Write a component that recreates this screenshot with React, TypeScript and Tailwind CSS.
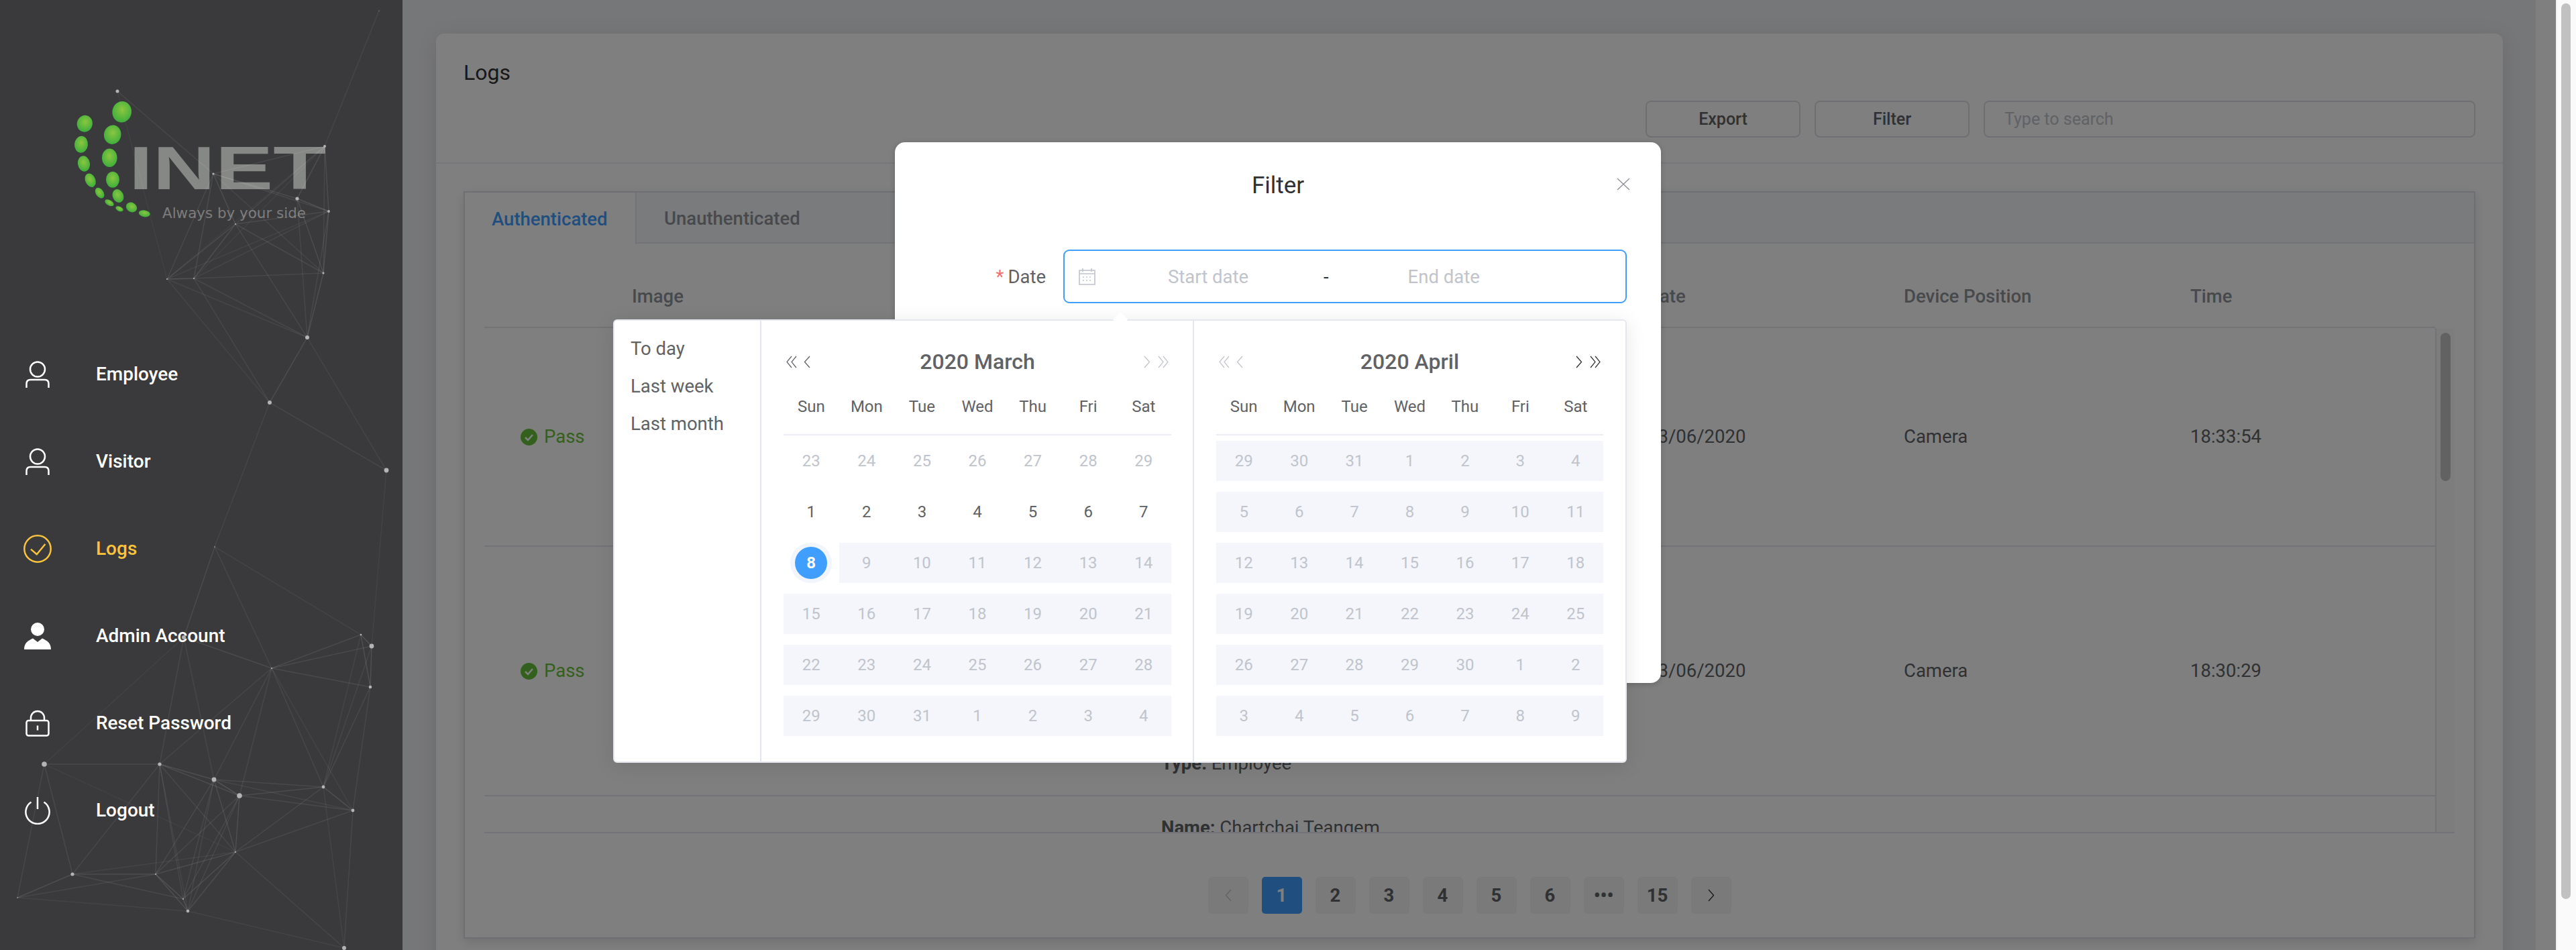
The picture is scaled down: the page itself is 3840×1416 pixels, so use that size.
const font = { fontFamily: 'Roboto, "Liberation Sans", sans-serif' }

const nodes: Record<string, [number, number, number]> = {
  A: [175, 136, 2.5], B: [565, 16, 0.6], C: [484, 218, 2], D: [318, 259, 1.6], E: [443, 296, 2.6],
  F: [490, 315, 1.9], G: [351, 334, 1], H: [482, 407, 1.6], I: [249, 416, 1], J: [289, 415, 1],
  K: [458, 503, 3], L: [402, 600, 3], M: [576, 701, 3.4], N: [320, 815, 0.8], O: [274, 950, 3],
  P: [405, 996, 1], Q: [538, 946, 1.3], R: [554, 963, 3.4], S: [552, 1024, 2.3], T: [66, 1139, 3.8],
  U: [238, 1139, 2.6], V: [319, 1162, 3.4], W: [357, 1186, 3.8], X: [482, 1173, 2.4], Y: [526, 1208, 2.4],
  Z: [351, 1270, 1], a: [108, 1303, 2.6], b: [232, 1303, 1], c: [26, 1338, 0.8], d: [273, 1340, 1],
  e: [280, 1358, 2.3], f: [513, 1413, 3],
}

const edges = 'AD AI BC CD CE CF CG CH CI CJ DE DF DG DH DI DJ EF EH EK FG FH FI FJ FK GH GI GJ GK HJ HK IJ IK IL JK JL KL KM LM LN NO NP NQ OP OU OV PQ PR PS PU PV PW PX PY QR QS QX RS RX SX SY TU Ta Tc TZ TO UV UW Ub Ud Ue UZ Ua VW VX VZ Vb Vd Ve VY WX WY WZ Wb Wd We XY XZ Xf YZ Yf Zb Za Ze Zd Zf ab ac ad bc bd be ce de ef MR'
  .split(' ')

const dots: [number, number, number, number, number][] = [
  [181.7, 166.7, 14.3, 15.7, 10], [167.7, 200.7, 12.7, 14.3, 10], [163.3, 235.3, 11.3, 13.7, 0],
  [168, 267.7, 10, 12, 0], [176, 292, 8, 10.3, -25], [196, 309, 8.5, 7, 30], [215.3, 318.3, 8.5, 5, 10],
  [126.3, 184.3, 11.5, 12.5, 15], [121, 215.3, 10, 12.5, 5], [125, 244, 9, 11.7, -10],
  [134.7, 268.7, 7.5, 10.7, -25], [148.7, 287.7, 5.7, 8.7, -35], [163, 302.3, 7.3, 4, 30], [178, 311.3, 6, 3.5, 25],
]

function Logo() {
  return (
    <svg width="600" height="493" className="block">
      <defs>
        <radialGradient id="dot" cx="50%" cy="40%" r="60%">
          <stop offset="0%" stopColor="#8cc63f" />
          <stop offset="100%" stopColor="#3cae3c" />
        </radialGradient>
      </defs>
      {dots.map(([cx, cy, rx, ry, rot]) => (
        <ellipse key={cx + '-' + cy} cx={cx} cy={cy} rx={rx} ry={ry} fill="url(#dot)" transform={`rotate(${rot} ${cx} ${cy})`} />
      ))}
      <text x="192" y="282" textLength="294" lengthAdjust="spacingAndGlyphs" fontSize="91" fontWeight="700" fill="#868885" fontFamily="Liberation Sans">INET</text>
      <text x="242" y="325" textLength="214" lengthAdjust="spacingAndGlyphs" fontSize="22" fill="#7c7c7c" fontFamily="DejaVu Sans">Always by your side</text>
    </svg>
  )
}

function Network() {
  return (
    <svg width="600" height="1416" className="absolute inset-0 pointer-events-none">
      {edges.map((e) => {
        const a = nodes[e[0]]
        const b = nodes[e[1]]
        // shorter links read brighter, long ones nearly fade out
        const len = Math.hypot(a[0] - b[0], a[1] - b[1])
        const opacity = Math.max(0.035, 0.13 * (1 - len / 420))
        return <line key={e} x1={a[0]} y1={a[1]} x2={b[0]} y2={b[1]} stroke="#ffffff" strokeOpacity={opacity} strokeWidth="1.5" />
      })}
      {Object.keys(nodes).map((k) => (
        <circle key={k} cx={nodes[k][0]} cy={nodes[k][1]} r={nodes[k][2]} fill="#b4b4b4" />
      ))}
    </svg>
  )
}

function UserIcon() {
  return (
    <svg width="36" height="40" viewBox="0 0 36 40" fill="none" stroke="currentColor" strokeWidth="2.5">
      <ellipse cx="18" cy="12.5" rx="11" ry="11" />
      <path d="M1.5 40v-6q0-6 6-6h21q6 0 6 6v6" />
    </svg>
  )
}

function CheckIcon() {
  return (
    <svg width="42" height="42" viewBox="0 0 42 42" fill="none" stroke="currentColor" strokeWidth="2.5">
      <ellipse cx="21" cy="21" rx="19.7" ry="19.7" />
      <path d="M11 21.6l8.8 7.7L32.4 14" />
    </svg>
  )
}

function AdminIcon() {
  return (
    <svg width="40" height="40" viewBox="0 0 40 40" fill="currentColor">
      <ellipse cx="20" cy="10" rx="10" ry="10" />
      <path d="M0 40C0 30 6 27 13 23.5L20 29l7-5.5C34 27 40 30 40 40Z" />
    </svg>
  )
}

function LockIcon() {
  return (
    <svg width="36" height="40" viewBox="0 0 36 40" fill="none" stroke="currentColor" strokeWidth="2.5">
      <rect x="1.5" y="16" width="33" height="22.5" rx="3" />
      <path d="M8 16v-4a10 10 0 0 1 20 0v4M18 23.5v7" />
    </svg>
  )
}

function PowerIcon() {
  return (
    <svg width="38" height="41" viewBox="0 0 38 41" fill="none" stroke="currentColor" strokeWidth="2.5">
      <path d="M9.5 7.5a17.6 17.6 0 1 0 19 0M19 0v18" />
    </svg>
  )
}

const menu = [
  { label: 'Employee', icon: <UserIcon /> },
  { label: 'Visitor', icon: <UserIcon /> },
  { label: 'Logs', icon: <CheckIcon />, active: true },
  { label: 'Admin Account', icon: <AdminIcon /> },
  { label: 'Reset Password', icon: <LockIcon /> },
  { label: 'Logout', icon: <PowerIcon /> },
]

function Sidebar() {
  return (
    <aside className="relative z-20 w-[600px] shrink-0 h-[1416px] bg-[#3a3a3c] overflow-hidden">
      <Logo />
      {menu.map((item) => (
        <div key={item.label} className={`flex items-center h-[130px] ${item.active ? 'text-[#f9c33d]' : 'text-white'}`}>
          <div className="w-[112px] flex justify-center">{item.icon}</div>
          <span className="ml-[31px] text-[28px] font-medium">{item.label}</span>
        </div>
      ))}
      <Network />
    </aside>
  )
}

function PassCell() {
  return (
    <div className="flex items-center gap-[10px] pl-[54px] text-[27.5px] text-[#67c23a]">
      <svg width="25" height="25" viewBox="0 0 25 25">
        <circle cx="12.5" cy="12.5" r="12.5" fill="#67c23a" />
        <path d="M7 13l4 4 7-8" fill="none" stroke="#ffffff" strokeWidth="2.5" />
      </svg>
      Pass
    </div>
  )
}

const cols = 'grid grid-cols-[220px_789px_725px_382px_427px_1fr]'

function TableRow({ time, height }: { time: string; height: string }) {
  return (
    <div className={`${cols} items-center border-b-[2.5px] border-[#e4e7ed] text-[27.5px] text-[#606266] ${height}`}>
      <PassCell />
      <div />
      <div className="self-end pb-[27px] leading-[40px]">
        <b className="font-bold">Type:</b> Employee
      </div>
      <div>13/06/2020</div>
      <div>Camera</div>
      <div>{time}</div>
    </div>
  )
}

const pages = ['1', '2', '3', '4', '5', '6', '•••', '15']

function Chevron({ dir, color }: { dir: 'left' | 'right'; color: string }) {
  return (
    <svg width="10" height="19" viewBox="0 0 10 19" fill="none" stroke={color} strokeWidth="1.3">
      <path d={dir === 'left' ? 'M9 1L1.5 9.5 9 18' : 'M1 1l7.5 8.5L1 18'} />
    </svg>
  )
}

function DoubleChevron({ dir, color }: { dir: 'left' | 'right'; color: string }) {
  return (
    <svg width="16" height="19" viewBox="0 0 16 19" fill="none" stroke={color} strokeWidth="1.2">
      <path d={dir === 'left' ? 'M8 1L1 9.5 8 18M15 1L8 9.5 15 18' : 'M1 1l7 8.5L1 18M8 1l7 8.5L8 18'} />
    </svg>
  )
}

function Pagination() {
  return (
    <div className="flex justify-center gap-[20px] mt-[65px]">
      <div className="w-[60px] h-[55px] rounded-[5px] bg-[#f4f4f5] flex items-center justify-center">
        <Chevron dir="left" color="#c0c4cc" />
      </div>
      {pages.map((p) => (
        <div
          key={p}
          className={`w-[60px] h-[55px] rounded-[5px] flex items-center justify-center text-[27.5px] font-bold ${
            p === '1' ? 'bg-[#409eff] text-white' : 'bg-[#f4f4f5] text-[#606266]'
          }`}
        >
          {p}
        </div>
      ))}
      <div className="w-[60px] h-[55px] rounded-[5px] bg-[#f4f4f5] flex items-center justify-center">
        <Chevron dir="right" color="#303133" />
      </div>
    </div>
  )
}

function LogsCard() {
  return (
    <main className="flex-1 h-[1416px] bg-[#edeef3] pt-[50px] pl-[50px] pr-[49px] overflow-hidden">
      <div className="bg-white rounded-t-[12px] shadow-[0_5px_30px_rgba(0,0,0,0.1)] min-h-[1400px]">
        <div className="px-[41px] pt-[38px] pb-[37px] border-b-[2.5px] border-[#ebeef5]">
          <div className="text-[32px] leading-[40px] text-[#303133]">Logs</div>
          <div className="flex justify-end gap-[21px] mt-[22px]">
            <div className="w-[231px] h-[55px] rounded-[8px] border-[2.5px] border-[#dcdfe6] flex items-center justify-center text-[25px] font-medium text-[#606266]">Export</div>
            <div className="w-[231px] h-[55px] rounded-[8px] border-[2.5px] border-[#dcdfe6] flex items-center justify-center text-[25px] font-medium text-[#606266]">Filter</div>
            <div className="w-[733px] h-[55px] rounded-[8px] border-[2.5px] border-[#dcdfe6] flex items-center pl-[29px] text-[25px] text-[#c0c4cc]">Type to search</div>
          </div>
        </div>

        <div className="mx-[41px] mt-[41px] h-[1114px] border-[2.5px] border-[#dcdfe6] shadow-[0_5px_15px_rgba(0,0,0,0.12)]">
          <div className="flex h-[76px] bg-[#f5f7fa] border-b-[2.5px] border-[#e4e7ed] text-[27.5px] font-medium">
            <div className="w-[256px] -mb-[2.5px] pt-[3px] bg-white border-r-[2.5px] border-[#e4e7ed] flex items-center pl-[40px] text-[#409eff]">Authenticated</div>
            <div className="pl-[41px] pt-[3px] flex items-center text-[#909399]">Unauthenticated</div>
          </div>

          <div className="pl-[29px] pr-[29px]">
            <div className={`${cols} h-[126px] pt-[33px] items-center border-b-[2.5px] border-[#e4e7ed] mr-[29px] text-[27.5px] font-medium text-[#909399]`}>
              <div />
              <div>Image</div>
              <div />
              <div>Date</div>
              <div>Device Position</div>
              <div>Time</div>
            </div>
            <div className="flex h-[753px] overflow-hidden border-b-[2.5px] border-[#e4e7ed]">
              <div className="flex-1 min-w-0">
                <TableRow time="18:33:54" height="h-[326px]" />
                <TableRow time="18:30:29" height="h-[372px]" />
                <div className={`${cols} text-[27.5px] text-[#606266] pt-[27px] leading-[40px]`}>
                  <div />
                  <div />
                  <div>
                    <b className="font-bold">Name:</b> Chartchai Teangem
                  </div>
                </div>
              </div>
              <div className="w-[29px] shrink-0 border-l-[2px] border-[#e4e7ed] bg-[#fafafa] px-[6px] pt-[7px]">
                <div className="h-[221px] rounded-full bg-[#c4c4c4]" />
              </div>
            </div>
            <Pagination />
          </div>
        </div>
      </div>
    </main>
  )
}

const march: { n: number; tone: 'off' | 'on' | 'sel' }[][] = [
  [23, 24, 25, 26, 27, 28, 29].map((n) => ({ n, tone: 'off' as const })),
  [1, 2, 3, 4, 5, 6, 7].map((n) => ({ n, tone: 'on' as const })),
]

const marchBands = [
  [9, 10, 11, 12, 13, 14],
  [15, 16, 17, 18, 19, 20, 21],
  [22, 23, 24, 25, 26, 27, 28],
  [29, 30, 31, 1, 2, 3, 4],
]

const aprilBands = [
  [29, 30, 31, 1, 2, 3, 4],
  [5, 6, 7, 8, 9, 10, 11],
  [12, 13, 14, 15, 16, 17, 18],
  [19, 20, 21, 22, 23, 24, 25],
  [26, 27, 28, 29, 30, 1, 2],
  [3, 4, 5, 6, 7, 8, 9],
]

const weekdays = ['Sun', 'Mon', 'Tue', 'Wed', 'Thu', 'Fri', 'Sat']

function WeekHead() {
  return (
    <div className="grid grid-cols-7 mt-[27px] pb-[21px] border-b-[2px] border-[#ebeef5] text-[24px] leading-[40px] text-[#606266] text-center">
      {weekdays.map((d) => (
        <div key={d}>{d}</div>
      ))}
    </div>
  )
}

function BandRow({ days }: { days: number[] }) {
  return (
    <div className="grid grid-cols-7 h-[60px] items-center bg-[#f4f6fb] text-[24px] text-[#c0c4cc] text-center">
      {days.map((d, i) => (
        <div key={i}>{d}</div>
      ))}
    </div>
  )
}

function PanelHead({ title, dark }: { title: string; dark: 'left' | 'right' }) {
  const l = dark === 'left' ? '#606266' : '#c0c4cc'
  const r = dark === 'right' ? '#303133' : '#c0c4cc'
  return (
    <div className="flex items-center justify-between px-[4px] h-[40px]">
      <div className="flex items-center gap-[10px] w-[80px]">
        <DoubleChevron dir="left" color={l} />
        <Chevron dir="left" color={l} />
      </div>
      <div className="text-[32px] font-medium text-[#606266]">{title}</div>
      <div className="flex items-center justify-end gap-[11px] w-[80px]">
        <Chevron dir="right" color={r} />
        <DoubleChevron dir="right" color={r} />
      </div>
    </div>
  )
}

function DatePopover() {
  return (
    <div className="absolute left-[-420px] top-[264px] w-[1511px] h-[661px] bg-white border-[2px] border-[#e4e7ed] rounded-[6px] shadow-[0_5px_30px_rgba(0,0,0,0.1)] flex">
      <div className="absolute left-[746px] -top-[10px] w-[16px] h-[16px] rotate-45 bg-white" />
      <div className="w-[219px] shrink-0 border-r-[2px] border-[#e4e7ed] pl-[24px] pt-[14px] text-[27.5px] leading-[56px] text-[#606266]">
        <div>To day</div>
        <div>Last week</div>
        <div>Last month</div>
      </div>
      <div className="w-[645px] shrink-0 border-r-[2px] border-[#e4e7ed] pl-[33px] pr-[32px] pt-[41px]">
        <PanelHead title="2020 March" dark="left" />
        <WeekHead />
        <div className="mt-[8px] flex flex-col gap-[16px]">
          {march.map((row, i) => (
            <div key={i} className={`grid grid-cols-7 h-[60px] items-center text-[24px] text-center ${i === 0 ? 'text-[#c0c4cc]' : 'text-[#606266]'}`}>
              {row.map((c) => (
                <div key={c.n}>{c.n}</div>
              ))}
            </div>
          ))}
          <div className="flex h-[60px]">
            <div className="w-[82.5px] flex items-center justify-center">
              <div className="w-[62px] h-[60px] rounded-full bg-[#f2f6fc] flex items-center justify-center">
                <div className="w-[48px] h-[48px] rounded-full bg-[#409eff] text-white font-bold text-[24px] flex items-center justify-center">8</div>
              </div>
            </div>
            <div className="flex-1 grid grid-cols-6 items-center bg-[#f4f6fb] text-[24px] text-[#c0c4cc] text-center">
              {marchBands[0].map((d) => (
                <div key={d}>{d}</div>
              ))}
            </div>
          </div>
          {marchBands.slice(1).map((days) => (
            <BandRow key={days[0]} days={days} />
          ))}
        </div>
      </div>
      <div className="flex-1 px-[33px] pt-[41px]">
        <PanelHead title="2020 April" dark="right" />
        <WeekHead />
        <div className="mt-[8px] flex flex-col gap-[16px]">
          {aprilBands.map((days) => (
            <BandRow key={days[0]} days={days} />
          ))}
        </div>
      </div>
    </div>
  )
}

function FilterModal() {
  return (
    <div className="absolute left-[1334px] top-[212px] w-[1142px] h-[806px] z-30 bg-white rounded-[15px] shadow-[0_2px_8px_rgba(0,0,0,0.2)]">
      <div className="pt-[45px] text-center text-[35px] leading-[40px] text-[#303133]">Filter</div>
      <svg className="absolute left-[1076px] top-[53px]" width="20" height="19" viewBox="0 0 20 19" fill="none" stroke="#909399" strokeWidth="1.4">
        <path d="M1 1l18 17M19 1L1 18" />
      </svg>
      <div className="flex items-center mt-[75px]">
        <div className="w-[225px] pt-[1px] text-right text-[27.5px] text-[#606266]">
          <span className="text-[#f56c6c] mr-[6px]">*</span>Date
        </div>
        <div className="ml-[26px] w-[840px] h-[80px] rounded-[9px] border-[2.5px] border-[#409eff] flex items-center pt-[1px] text-[27.5px] text-[#c0c4cc] whitespace-nowrap">
          <svg className="ml-[21px] shrink-0" width="25" height="25" viewBox="0 0 25 25" fill="none" stroke="#c0c4cc" strokeWidth="1.6">
            <rect x="1" y="3" width="23" height="21" />
            <path d="M1 8h23M6 0v5M19 0v5" />
            <path d="M6 13h2M11 13h2M16 13h2M6 18h2M11 18h2M16 18h2" />
          </svg>
          <div className="ml-[108px] w-[122px]">Start date</div>
          <div className="ml-[110px] text-[#303133]">-</div>
          <div className="ml-[118px]">End date</div>
        </div>
      </div>
      <DatePopover />
    </div>
  )
}

export default function App() {
  return (
    <div className="relative flex w-[3840px] h-[1416px] overflow-hidden bg-white" style={font}>
      <Sidebar />
      <LogsCard />
      <div className="w-[30px] h-[1416px] shrink-0 bg-white" />
      <div className="absolute left-0 top-0 w-[3810px] h-[1416px] z-10 bg-black/50" />
      <div className="w-[30px] h-[1416px] shrink-0 bg-[#fafafa] border-l-[2px] border-[#f0f0f0] pl-[6px] pr-[8px] pt-[5px]">
        <div className="h-[1335px] rounded-full bg-[#c1c1c1]" />
      </div>
      <FilterModal />
    </div>
  )
}
